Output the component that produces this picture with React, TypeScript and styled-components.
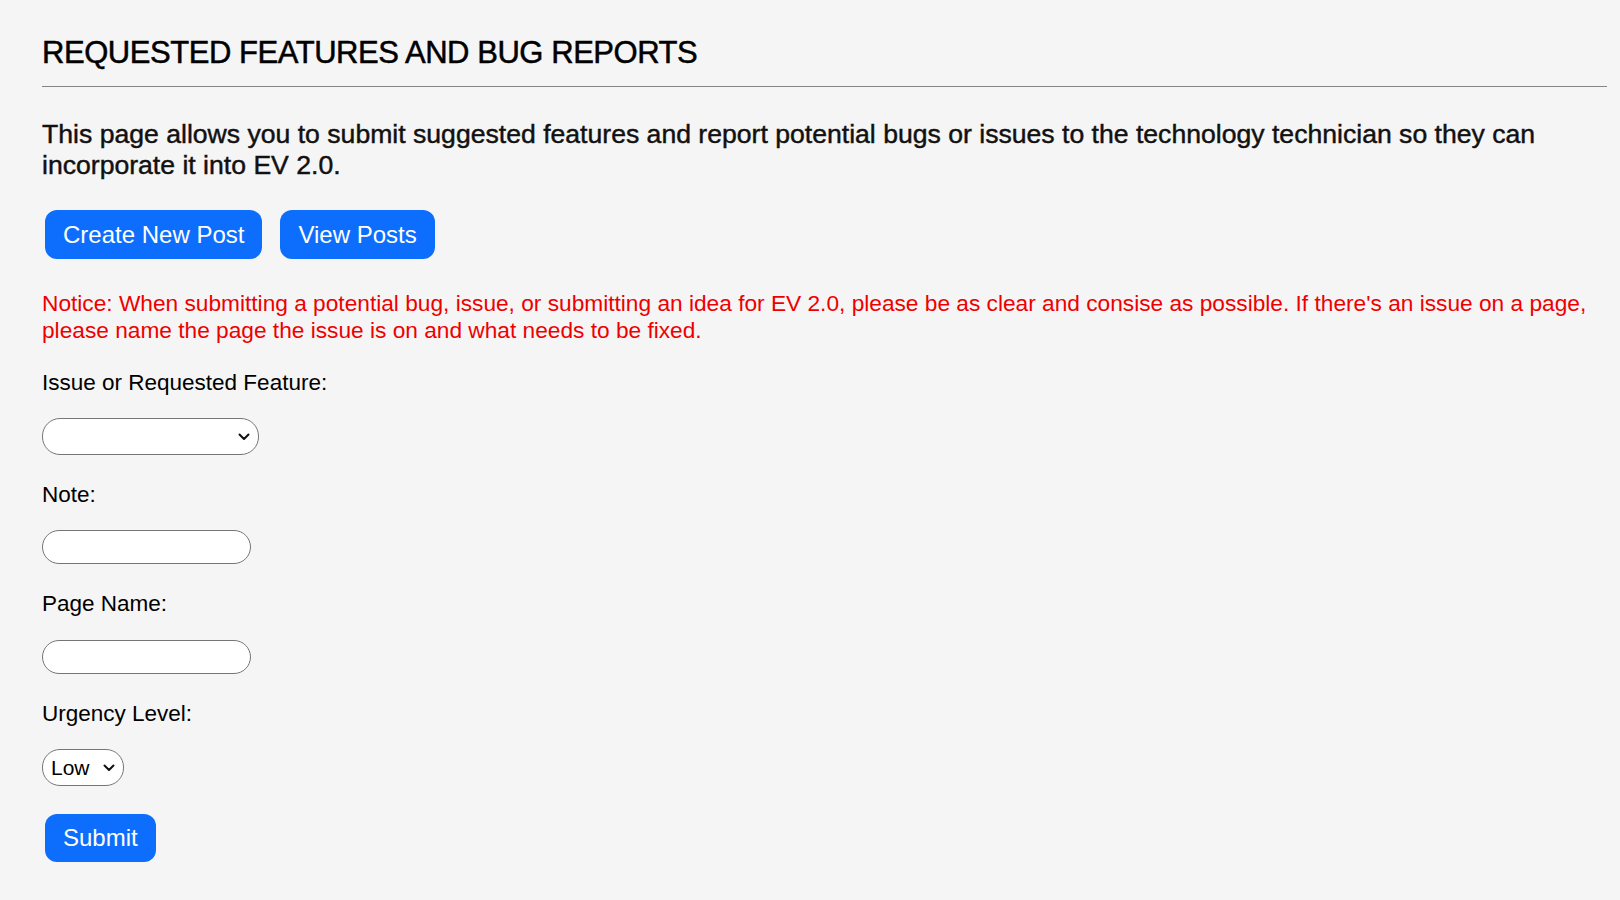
import React from "react";
import styled, { createGlobalStyle } from "styled-components";

const GlobalStyle = createGlobalStyle`
  html, body {
    margin: 0;
    padding: 0;
    background: #f5f5f5;
  }
  body {
    font-family: "Liberation Sans", Arial, sans-serif;
    color: #000;
  }
  * { box-sizing: border-box; }
`;

const chevron = encodeURIComponent(
  '<svg xmlns="http://www.w3.org/2000/svg" width="12" height="8" viewBox="0 0 12 8"><path d="M1.5 1.5 L6 6 L10.5 1.5" fill="none" stroke="#111" stroke-width="2" stroke-linecap="round" stroke-linejoin="round"/></svg>'
);

const Page = styled.main`
  padding: 35px 13px 40px 42px;
  min-height: 900px;
  background: #f5f5f5;
`;

const Title = styled.h1`
  margin: 0;
  font-family: "Liberation Sans", Arial, sans-serif;
  font-weight: 400;
  font-size: 31px;
  letter-spacing: -0.45px;
  line-height: 36px;
  color: #000;
  -webkit-text-stroke: 0.5px #000;
`;

const Rule = styled.hr`
  margin: 15px 0 0 0;
  border: 0;
  border-top: 1px solid #858585;
  height: 0;
`;

const Intro = styled.p`
  margin: 32px 0 0 0;
  font-size: 26.6px;
  line-height: 31px;
  color: #111;
  -webkit-text-stroke: 0.45px #111;
`;

const ButtonRow = styled.div`
  display: flex;
  gap: 18px;
  margin: 29px 0 0 3px;
`;

const PillButton = styled.button`
  font-family: "Liberation Sans", Arial, sans-serif;
  font-size: 24px;
  line-height: 28px;
  padding: 10.5px 18px;
  border: 0;
  border-radius: 12px;
  background: #0d6efd;
  color: #fff;
  cursor: pointer;
`;

const Notice = styled.p`
  margin: 30.5px 0 0 0;
  font-size: 22.7px;
  line-height: 27px;
  color: #ee0000;
`;

const Form = styled.form`
  display: flex;
  flex-direction: column;
  align-items: flex-start;
  margin-top: 25px;
`;

const Label = styled.label`
  display: block;
  font-size: 22.5px;
  line-height: 27px;
  color: #000;
  margin-bottom: 22.5px;
`;

const Select = styled.select<{ $w: number }>`
  appearance: none;
  -webkit-appearance: none;
  width: ${(p) => p.$w}px;
  height: 37px;
  border: 1px solid #767676;
  border-radius: 18px;
  background-color: #fff;
  background-image: url("data:image/svg+xml,${chevron}");
  background-repeat: no-repeat;
  background-position: right 8px center;
  background-size: 12px 8px;
  font-family: "Liberation Sans", Arial, sans-serif;
  font-size: 21px;
  color: #000;
  padding: 0 24px 0 8px;
  margin-bottom: 25.5px;
`;

const TextInput = styled.input`
  width: 209px;
  height: 34px;
  border: 1px solid #767676;
  border-radius: 17px;
  background: #fff;
  font-family: "Liberation Sans", Arial, sans-serif;
  font-size: 18px;
  padding: 0 12px;
  margin-bottom: 26px;
`;

const SubmitButton = styled(PillButton)`
  margin: 2px 0 0 3px;
  padding: 10px 18px;
`;

export default function App() {
  return (
    <>
      <GlobalStyle />
      <Page>
        <Title>REQUESTED FEATURES AND BUG REPORTS</Title>
        <Rule />
        <Intro>
          This page allows you to submit suggested features and report potential bugs or issues to the
          technology technician so they can incorporate it into EV 2.0.
        </Intro>
        <ButtonRow>
          <PillButton type="button">Create New Post</PillButton>
          <PillButton type="button">View Posts</PillButton>
        </ButtonRow>
        <Notice>
          Notice: When submitting a potential bug, issue, or submitting an idea for EV 2.0, please be as
          clear and consise as possible. If there's an issue on a page, please name the page the issue is
          on and what needs to be fixed.
        </Notice>
        <Form onSubmit={(e) => e.preventDefault()}>
          <Label htmlFor="kind">Issue or Requested Feature:</Label>
          <Select id="kind" $w={217} defaultValue="">
            <option value=""></option>
            <option value="issue">Issue</option>
            <option value="feature">Requested Feature</option>
          </Select>
          <Label htmlFor="note">Note:</Label>
          <TextInput id="note" type="text" />
          <Label htmlFor="page">Page Name:</Label>
          <TextInput id="page" type="text" />
          <Label htmlFor="urgency">Urgency Level:</Label>
          <Select id="urgency" $w={82} defaultValue="low">
            <option value="low">Low</option>
            <option value="medium">Medium</option>
            <option value="high">High</option>
          </Select>
          <SubmitButton type="submit">Submit</SubmitButton>
        </Form>
      </Page>
    </>
  );
}
